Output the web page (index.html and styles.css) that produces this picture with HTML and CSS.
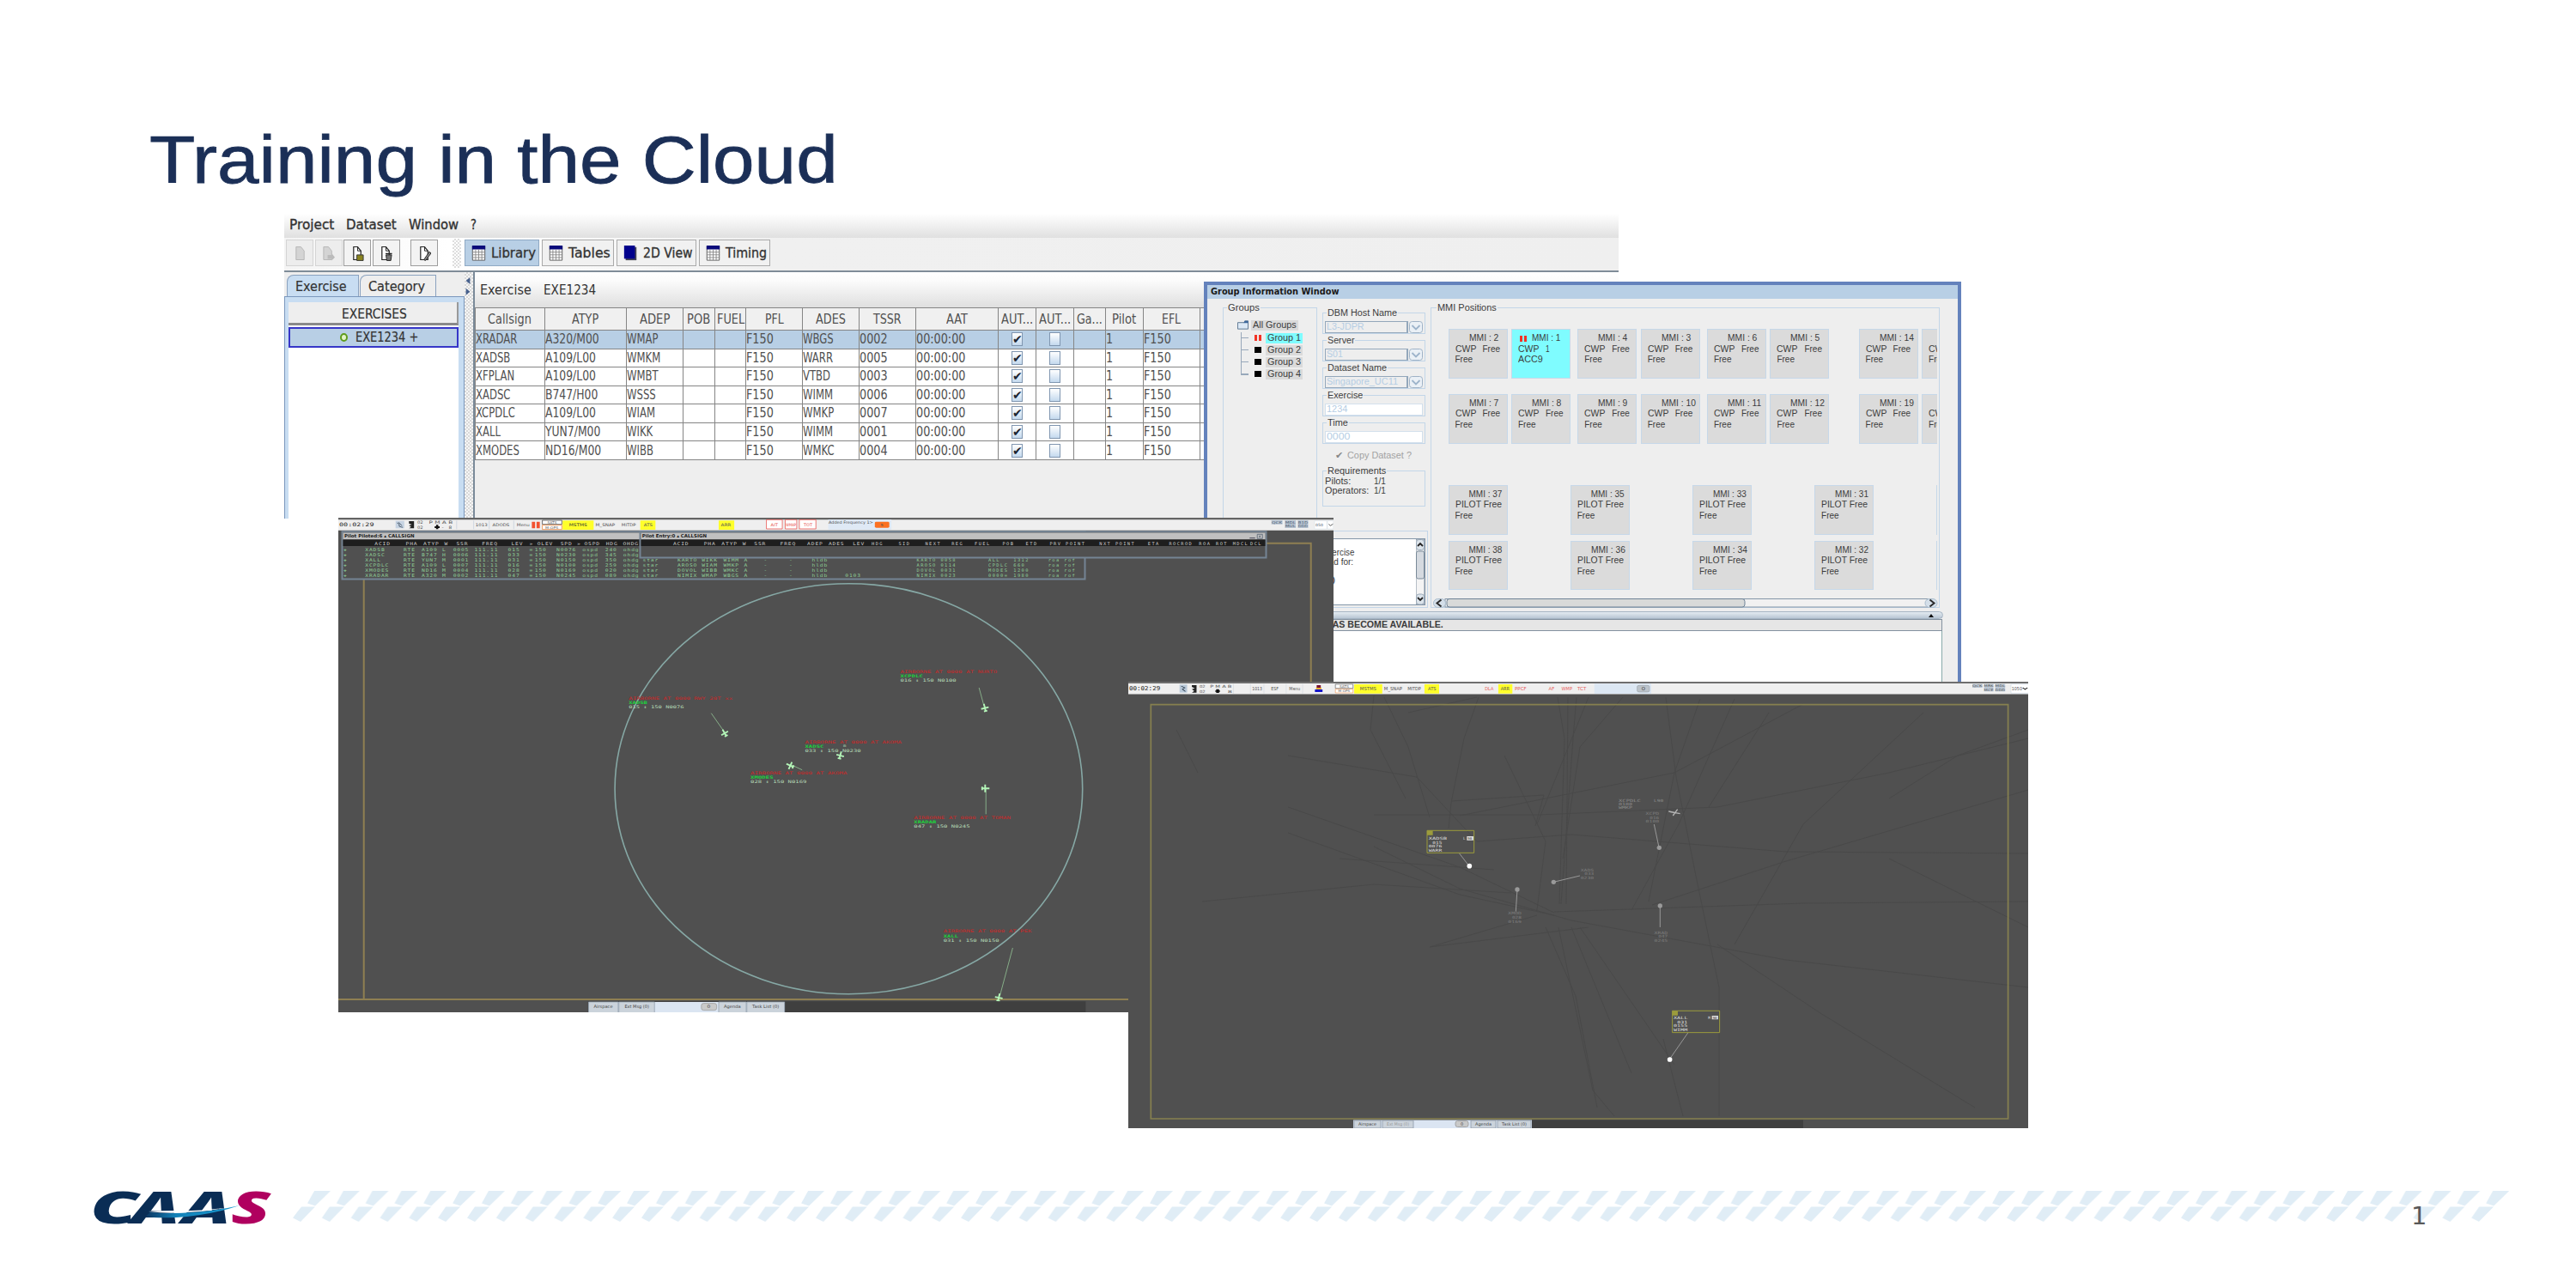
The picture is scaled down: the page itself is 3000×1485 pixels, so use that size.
FILE: index.html
```html
<!DOCTYPE html>
<html lang="en">
<head>
<meta charset="utf-8">
<title>Training in the Cloud</title>
<link rel="stylesheet" href="styles.css">
</head>
<body>
<main class="slide">
<h1 class="title"><span data-w="802">Training in the Cloud</span></h1>

<section class="win editor">
  <nav class="menubar"><span data-w="52">Project</span><span data-w="59">Dataset</span><span data-w="58">Window</span><span data-w="7">?</span></nav>
  <div class="toolbar">
    <div class="tb off"><svg viewBox="0 0 16 20"><path d="M3 2h6l4 5v11H3z" fill="#d4d4d4" stroke="#b5b5b5"/></svg></div>
    <div class="tb off"><svg viewBox="0 0 16 20"><path d="M2 2h6l4 5v11H2z" fill="#d4d4d4" stroke="#b5b5b5"/><path d="M7 12h5v-2l4 5-4 4v-2H7z" fill="#bbb"/></svg></div>
    <div class="tb"><svg viewBox="0 0 16 20"><path d="M3 2h5l4 5v11H3z" fill="#fff" stroke="#222" stroke-width="1.3"/><path d="M8 2v5h4" fill="none" stroke="#222"/><path d="M7 12h8v7H7z" fill="#8a8420" stroke="#333"/></svg></div>
    <div class="tb"><svg viewBox="0 0 16 20"><path d="M3 2h5l4 5v11H3z" fill="#fff" stroke="#222" stroke-width="1.3"/><path d="M8 2v5h4" fill="none" stroke="#222"/><path d="M8 12h7l-1 7H9z" fill="#777" stroke="#222"/><path d="M7.500 10.500h8" stroke="#222" stroke-width="1.500"/></svg></div>
    <div class="tb gap"><svg viewBox="0 0 16 20"><path d="M3 2h5l4 5v11H3z" fill="#fff" stroke="#222" stroke-width="1.3"/><path d="M8 2v5h4" fill="none" stroke="#222"/><path d="M7 18l7-10 2 2-7 9z" fill="#888" stroke="#222"/></svg></div>
    <div class="grip"></div>
    <div class="view on"><svg class="cal"><use href="#cal"/></svg><span data-w="52">Library</span></div>
    <div class="view"><svg class="cal"><use href="#cal"/></svg><span data-w="49">Tables</span></div>
    <div class="view"><svg class="cal" viewBox="0 0 17 20"><path d="M2 2h14v17H2z" fill="#445"/><path d="M0 0h14v17H0z" fill="#00008c"/></svg><span data-w="58">2D View</span></div>
    <div class="view"><svg class="cal"><use href="#cal"/></svg><span data-w="48">Timing</span></div>
  </div>
  <div class="work">
    <aside class="side">
      <div class="tabs"><div class="tab sel"><span data-w="60">Exercise</span></div><div class="tab"><span data-w="66">Category</span></div></div>
      <div class="pane"><div class="list">
        <div class="lhead"><span data-w="76">EXERCISES</span></div>
        <div class="lrow"><i class="ring"></i><span data-w="73">EXE1234 +</span></div>
      </div></div>
    </aside>
    <div class="split"><svg viewBox="0 0 10 34"><path d="M8 2v10L2 7zM2 18v10l6-5z" fill="#47608c"/></svg></div>
    <div class="content">
      <div class="chead"><span data-w="60">Exercise</span><span data-w="61">EXE1234</span></div>
      <table class="grid">
        <colgroup><col class="c1"><col class="c2"><col class="c3"><col class="c4"><col class="c4"><col class="c5"><col class="c5"><col class="c5"><col class="c6"><col class="c7"><col class="c7"><col class="c4"><col class="c8"><col class="c5"><col class="c9"></colgroup>
        <thead><tr><th><span data-w="51">Callsign</span></th><th><span data-w="31">ATYP</span></th><th><span data-w="35">ADEP</span></th><th><span data-w="27">POB</span></th><th><span data-w="32">FUEL</span></th><th><span data-w="22">PFL</span></th><th><span data-w="35">ADES</span></th><th><span data-w="33">TSSR</span></th><th><span data-w="25">AAT</span></th><th><span data-w="37">AUT...</span></th><th><span data-w="37">AUT...</span></th><th><span data-w="30">Ga...</span></th><th><span data-w="28">Pilot</span></th><th><span data-w="22">EFL</span></th><th></th></tr></thead>
        <tbody>
        <tr class="sel"><td><span>XRADAR</span></td><td><span class="m">A320/M00</span></td><td><span>WMAP</span></td><td></td><td></td><td><span class="d">F150</span></td><td><span>WBGS</span></td><td><span class="d">0002</span></td><td><span class="d">00:00:00</span></td><td><i class="cb">✔</i></td><td><i class="cb"></i></td><td></td><td><span class="d">1</span></td><td><span class="d">F150</span></td><td></td></tr>
        <tr><td><span>XADSB</span></td><td><span class="m">A109/L00</span></td><td><span>WMKM</span></td><td></td><td></td><td><span class="d">F150</span></td><td><span>WARR</span></td><td><span class="d">0005</span></td><td><span class="d">00:00:00</span></td><td><i class="cb">✔</i></td><td><i class="cb"></i></td><td></td><td><span class="d">1</span></td><td><span class="d">F150</span></td><td></td></tr>
        <tr><td><span>XFPLAN</span></td><td><span class="m">A109/L00</span></td><td><span>WMBT</span></td><td></td><td></td><td><span class="d">F150</span></td><td><span>VTBD</span></td><td><span class="d">0003</span></td><td><span class="d">00:00:00</span></td><td><i class="cb">✔</i></td><td><i class="cb"></i></td><td></td><td><span class="d">1</span></td><td><span class="d">F150</span></td><td></td></tr>
        <tr><td><span>XADSC</span></td><td><span class="m">B747/H00</span></td><td><span>WSSS</span></td><td></td><td></td><td><span class="d">F150</span></td><td><span>WIMM</span></td><td><span class="d">0006</span></td><td><span class="d">00:00:00</span></td><td><i class="cb">✔</i></td><td><i class="cb"></i></td><td></td><td><span class="d">1</span></td><td><span class="d">F150</span></td><td></td></tr>
        <tr><td><span>XCPDLC</span></td><td><span class="m">A109/L00</span></td><td><span>WIAM</span></td><td></td><td></td><td><span class="d">F150</span></td><td><span>WMKP</span></td><td><span class="d">0007</span></td><td><span class="d">00:00:00</span></td><td><i class="cb">✔</i></td><td><i class="cb"></i></td><td></td><td><span class="d">1</span></td><td><span class="d">F150</span></td><td></td></tr>
        <tr><td><span>XALL</span></td><td><span class="m">YUN7/M00</span></td><td><span>WIKK</span></td><td></td><td></td><td><span class="d">F150</span></td><td><span>WIMM</span></td><td><span class="d">0001</span></td><td><span class="d">00:00:00</span></td><td><i class="cb">✔</i></td><td><i class="cb"></i></td><td></td><td><span class="d">1</span></td><td><span class="d">F150</span></td><td></td></tr>
        <tr><td><span>XMODES</span></td><td><span class="m">ND16/M00</span></td><td><span>WIBB</span></td><td></td><td></td><td><span class="d">F150</span></td><td><span>WMKC</span></td><td><span class="d">0004</span></td><td><span class="d">00:00:00</span></td><td><i class="cb">✔</i></td><td><i class="cb"></i></td><td></td><td><span class="d">1</span></td><td><span class="d">F150</span></td><td></td></tr>
        </tbody>
      </table>
    </div>
  </div>
</section>

<section class="win group">
  <header><span data-w="149">Group Information Window</span></header>
  <div class="gbody">
    <div class="box groups"><b class="lg"><span data-w="37">Groups</span></b>
      <div class="root"><svg viewBox="0 0 14 11"><path d="M.5 2.500h8l1-2h4v10H.5z" fill="#dce9f6" stroke="#56708c"/><path d="M9 .5h4.500V3H8z" fill="#3f6a9c"/></svg><em><span data-w="51">All Groups</span></em></div>
      <div class="tree">
        <div><i class="pause"></i><em class="cy"><span data-w="39">Group 1</span></em></div>
        <div><i class="sq"></i><em><span data-w="39">Group 2</span></em></div>
        <div><i class="sq"></i><em><span data-w="39">Group 3</span></em></div>
        <div><i class="sq"></i><em><span data-w="39">Group 4</span></em></div>
      </div>
    </div>
    <div class="mid">
      <div class="box f"><b class="lg"><span data-w="81">DBM Host Name</span></b><div class="combo"><p><span data-w="44">L3-JDPR</span></p><svg viewBox="0 0 16 14"><use href="#drop"/></svg></div></div>
      <div class="box f"><b class="lg"><span data-w="31">Server</span></b><div class="combo"><p><span data-w="19">S01</span></p><svg viewBox="0 0 16 14"><use href="#drop"/></svg></div></div>
      <div class="box f"><b class="lg"><span data-w="69">Dataset Name</span></b><div class="combo"><p><span data-w="83">Singapore_UC11</span></p><svg viewBox="0 0 16 14"><use href="#drop"/></svg></div></div>
      <div class="box f"><b class="lg"><span data-w="41">Exercise</span></b><div class="input"><span data-w="24">1234</span></div></div>
      <div class="box f"><b class="lg"><span data-w="24">Time</span></b><div class="input"><span data-w="27">0000</span></div></div>
      <div class="copy"><i>✔</i><span data-w="75">Copy Dataset ?</span></div>
      <div class="box req"><b class="lg"><span data-w="68">Requirements</span></b>
        <div class="rq"><span data-w="30">Pilots:</span></div><div class="rq"><span data-w="14">1/1</span></div>
        <div class="rq"><span data-w="51">Operators:</span></div><div class="rq"><span data-w="14">1/1</span></div>
      </div>
      <div class="box msg"><div class="area"><div class="lines"><p><span data-w="37">Exercise</span></p><p><span data-w="36">load for:</span></p><p>&nbsp;</p><p><span data-w="15">(0)</span></p></div>
        <svg viewBox="0 0 10 76"><path d="M0 0h10v76H0z" fill="#f4f4f4" stroke="#7a8a99"/><rect x=".5" y="14" width="9" height="32" rx="2" fill="#d5dae0" stroke="#7a8a99"/><rect x=".5" y=".5" width="9" height="12" rx="3" fill="#dbe3ea" stroke="#9aa9b8"/><rect x=".5" y="64" width="9" height="12" rx="3" fill="#dbe3ea" stroke="#9aa9b8"/><path d="M2 8l3-3 3 3M2 68l3 3 3-3" fill="none" stroke="#222" stroke-width="1.8"/></svg></div></div>
    </div>
    <div class="box mmi"><b class="lg"><span data-w="69">MMI Positions</span></b>
      <div class="row r1">
        <div class="pair"><div class="card"><p><span data-w="34">MMI : 2</span></p><p><span data-w="24">CWP</span><span data-w="21">Free</span></p><p><span data-w="21">Free</span></p></div><div class="card on"><p><i class="pause"></i><span data-w="33">MMI : 1</span></p><p><span data-w="24">CWP</span><span data-w="5">1</span></p><p><span data-w="29">ACC9</span></p></div></div>
        <div class="pair"><div class="card"><p><span data-w="34">MMI : 4</span></p><p><span data-w="24">CWP</span><span data-w="21">Free</span></p><p><span data-w="21">Free</span></p></div><div class="card"><p><span data-w="34">MMI : 3</span></p><p><span data-w="24">CWP</span><span data-w="21">Free</span></p><p><span data-w="21">Free</span></p></div></div>
        <div class="pair"><div class="card"><p><span data-w="34">MMI : 6</span></p><p><span data-w="24">CWP</span><span data-w="21">Free</span></p><p><span data-w="21">Free</span></p></div><div class="card"><p><span data-w="34">MMI : 5</span></p><p><span data-w="24">CWP</span><span data-w="21">Free</span></p><p><span data-w="21">Free</span></p></div></div>
        <div class="pair far"><div class="card"><p><span data-w="40">MMI : 14</span></p><p><span data-w="24">CWP</span><span data-w="21">Free</span></p><p><span data-w="21">Free</span></p></div><div class="card"><p>&nbsp;</p><p><span data-w="24">CWP</span></p><p><span data-w="21">Free</span></p></div></div>
      </div>
      <div class="row r2">
        <div class="pair"><div class="card"><p><span data-w="34">MMI : 7</span></p><p><span data-w="24">CWP</span><span data-w="21">Free</span></p><p><span data-w="21">Free</span></p></div><div class="card"><p><span data-w="34">MMI : 8</span></p><p><span data-w="24">CWP</span><span data-w="21">Free</span></p><p><span data-w="21">Free</span></p></div></div>
        <div class="pair"><div class="card"><p><span data-w="34">MMI : 9</span></p><p><span data-w="24">CWP</span><span data-w="21">Free</span></p><p><span data-w="21">Free</span></p></div><div class="card"><p><span data-w="40">MMI : 10</span></p><p><span data-w="24">CWP</span><span data-w="21">Free</span></p><p><span data-w="21">Free</span></p></div></div>
        <div class="pair"><div class="card"><p><span data-w="39">MMI : 11</span></p><p><span data-w="24">CWP</span><span data-w="21">Free</span></p><p><span data-w="21">Free</span></p></div><div class="card"><p><span data-w="40">MMI : 12</span></p><p><span data-w="24">CWP</span><span data-w="21">Free</span></p><p><span data-w="21">Free</span></p></div></div>
        <div class="pair far"><div class="card"><p><span data-w="40">MMI : 19</span></p><p><span data-w="24">CWP</span><span data-w="21">Free</span></p><p><span data-w="21">Free</span></p></div><div class="card"><p>&nbsp;</p><p><span data-w="24">CWP</span></p><p><span data-w="21">Free</span></p></div></div>
      </div>
      <div class="row pil r3">
        <div class="card"><p><span data-w="39">MMI : 37</span></p><p><span data-w="54">PILOT Free</span></p><p><span data-w="21">Free</span></p></div>
        <div class="card"><p><span data-w="39">MMI : 35</span></p><p><span data-w="54">PILOT Free</span></p><p><span data-w="21">Free</span></p></div>
        <div class="card"><p><span data-w="39">MMI : 33</span></p><p><span data-w="54">PILOT Free</span></p><p><span data-w="21">Free</span></p></div>
        <div class="card"><p><span data-w="39">MMI : 31</span></p><p><span data-w="54">PILOT Free</span></p><p><span data-w="21">Free</span></p></div>
        <div class="card"></div>
      </div>
      <div class="row pil r4">
        <div class="card"><p><span data-w="39">MMI : 38</span></p><p><span data-w="54">PILOT Free</span></p><p><span data-w="21">Free</span></p></div>
        <div class="card"><p><span data-w="40">MMI : 36</span></p><p><span data-w="54">PILOT Free</span></p><p><span data-w="21">Free</span></p></div>
        <div class="card"><p><span data-w="40">MMI : 34</span></p><p><span data-w="54">PILOT Free</span></p><p><span data-w="21">Free</span></p></div>
        <div class="card"><p><span data-w="39">MMI : 32</span></p><p><span data-w="54">PILOT Free</span></p><p><span data-w="21">Free</span></p></div>
        <div class="card"></div>
      </div>
      <svg class="hs" viewBox="0 0 588 11"><rect x="14" y=".5" width="562" height="9.500" fill="#f1f1f1" stroke="#8496a8"/><rect x="16" y=".5" width="347" height="9.500" rx="3" fill="#d8dad9" stroke="#6f8396"/><rect x=".5" y=".5" width="14" height="10" rx="5" fill="#d4dfe9" stroke="#a9bccd"/><rect x="573" y=".5" width="14" height="10" rx="5" fill="#d4dfe9" stroke="#a9bccd"/><path d="M9.500 1.500l-5 4 5 4M578.500 1.500l5 4-5 4" fill="none" stroke="#2b2b2b" stroke-width="2"/></svg>
    </div>
  </div>
  <div class="divider"><svg viewBox="0 0 6 4"><path d="M0 4h6L3 0z" fill="#111"/></svg></div>
  <div class="avail"><span data-w="137">HAS BECOME AVAILABLE.</span></div>
  <div class="blank"></div>
</section>

<section class="win radar1">
<svg viewBox="394 603 1159 576" font-family="DejaVu Sans Mono, monospace">
  <path d="M394 603h1159v576H394z" fill="#505050"/>
  <path d="M394 605h1159v12.700H394z" fill="#efefef"/><path d="M394 603h1159v2.200H394z" fill="#646464"/>
  <path d="M423.700 1164V632.700h1103V1164" fill="none" stroke="#8f7f52" stroke-width="2"/>
  <path d="M394 1164h1159" stroke="#8f7f52" stroke-width="2"/>
  <ellipse cx="988.400" cy="918.700" rx="272.300" ry="239" fill="none" stroke="#86a8a5" stroke-width="1.600"/>
  <!-- clock and mode toolbar -->
  <g transform="translate(390 595) scale(.4209 .3333)" font-family="DejaVu Sans, sans-serif" font-size="14" fill="#555">
    <path d="M1365 30h175v36h-175z" fill="#dfe9f5"/>
    <text x="12" y="55" font-size="18" fill="#222" textLength="96" font-family="DejaVu Sans Mono">00:02:29</text>
    <path d="M168 35h24v26h-24z" fill="#c6d3e2"/><path d="M172 42l6 4v8l10 4M176 40l10 12" stroke="#345" stroke-width="2" fill="none"/>
    <path d="M205 36h14v25h-14l6-5-6-5 8-3-8-4z" fill="#222"/>
    <text x="228" y="46" textLength="16">02</text><text x="228" y="62" textLength="16">02</text>
    <text x="260" y="46" textLength="66">P M A B</text><text x="296" y="62">-</text><text x="315" y="62">8</text>
    <path d="M283 49v15M276 57h14" stroke="#111" stroke-width="6"/>
    <path d="M337 34v30M384 34v30M427 34v30M495 34v30" stroke="#c4cfdd" stroke-width="2"/>
    <text x="389" y="53" textLength="33">1013</text><text x="436" y="53" textLength="47">ADODS</text><text x="503" y="53" textLength="36">Menu</text>
    <path d="M545 38h9v23h-9zM558 38h9v23h-9z" fill="#f2502f"/>
    <path d="M574 33h54v14h-54z" fill="#fff" stroke="#444" stroke-width="2"/><path d="M574 50h54v15h-54z" fill="#fff" stroke="#f08030" stroke-width="2"/>
    <text x="588" y="45" font-size="11" textLength="26">SATS</text><text x="582" y="62" font-size="11" textLength="36">M-OPS</text>
    <path d="M630 34h86v32h-86zM845 34h42v32h-42zM1062 34h43v32h-43z" fill="#ffff2a"/>
    <text x="648" y="53" fill="#333" textLength="50">MSTMS</text><text x="721" y="53" textLength="54">M_SNAP</text><text x="793" y="53" textLength="40">MITDP</text><text x="855" y="53" textLength="24">ATS</text><text x="1068" y="53" textLength="28">ARR</text>
    <g fill="#fff" stroke="#e8504c" stroke-width="2"><path d="M1194 31h44v32h-44zM1246 31h32v32h-32zM1285 31h46v32h-46z"/></g>
    <g fill="#e8504c"><text x="1206" y="53" textLength="20">AIT</text><text x="1248" y="53" textLength="28">WMAP</text><text x="1297" y="53" textLength="24">TOT</text></g>
    <text x="1366" y="45" textLength="123">Added Frequency 1&gt;</text>
    <rect x="1494" y="38" width="40" height="21" rx="4" fill="#fb7022"/><text x="1510" y="53" font-size="12">5</text>
  </g>
  <g transform="translate(1000 595) scale(.3571 .3333)" font-family="DejaVu Sans" font-size="12" fill="#4d5e72">
    <path d="M1346 32h36v15h-36zM1390 32h36v28h-36zM1432 32h34v28h-34z" fill="#b9c5d2"/>
    <text x="1347" y="44" textLength="34">QCK</text><text x="1391" y="44" textLength="34">MDL</text><text x="1391" y="58" textLength="34">MUL</text><text x="1433" y="44" textLength="32">B1D</text><text x="1433" y="58" textLength="32">DDD</text>
    <path d="M1487 35h40v28h-40zM1529 35h19v28h-19z" fill="#fff" stroke="#c3d2e0"/><text x="1490" y="53" font-size="13">050</text><path d="M1533 46l5 6 9-6" fill="none" stroke="#222" stroke-width="2"/>
  </g>
  <!-- piloted flights list -->
  <path d="M398.500 619.300h865V674.500h-865z" fill="#505050" stroke="#748494" stroke-width="2"/>
  <path d="M399.500 620.500h863v7.800h-863z" fill="#c0c0c0"/><path d="M399.500 628.500h863v7.500h-863z" fill="#1e1e1e"/>
  <g transform="translate(390 595) scale(.4209 .3333)" font-size="15" letter-spacing="2" fill="#8fce97">
    <text x="26" y="93" font-family="DejaVu Sans" font-size="16" letter-spacing="0" fill="#222" textLength="194" font-weight="bold">Pilot Piloted:6 ▴ CALLSIGN</text>
    <text y="121" fill="#c8c8c8"><tspan x="110">ACID</tspan><tspan x="196">PHA</tspan><tspan x="245">ATYP</tspan><tspan x="303">W</tspan><tspan x="336">SSR</tspan><tspan x="407">FREQ</tspan><tspan x="488">LEV</tspan><tspan x="538">»</tspan><tspan x="560">OLEV</tspan><tspan x="624">SPD</tspan><tspan x="670">»</tspan><tspan x="690">OSPD</tspan><tspan x="750">HDG</tspan><tspan x="797">OHDG</tspan></text>
    <text y="140"><tspan x="24">✚</tspan><tspan x="84">XADSB</tspan><tspan x="190">RTE</tspan><tspan x="240">A109</tspan><tspan x="297">L</tspan><tspan x="327">0005</tspan><tspan x="386">111.11</tspan><tspan x="479">015</tspan><tspan x="538">=</tspan><tspan x="553">150</tspan><tspan x="613">N0076</tspan><tspan x="685">ospd</tspan><tspan x="748">240</tspan><tspan x="798">ohdg</tspan></text>
    <text y="158"><tspan x="24">✚</tspan><tspan x="84">XADSC</tspan><tspan x="190">RTE</tspan><tspan x="240">B747</tspan><tspan x="297">H</tspan><tspan x="327">0006</tspan><tspan x="386">111.11</tspan><tspan x="479">033</tspan><tspan x="538">=</tspan><tspan x="553">150</tspan><tspan x="613">N0230</tspan><tspan x="685">ospd</tspan><tspan x="748">345</tspan><tspan x="798">ohdg</tspan></text>
    <text y="176"><tspan x="24">✚</tspan><tspan x="84">XALL</tspan><tspan x="190">RTE</tspan><tspan x="240">YUN7</tspan><tspan x="297">M</tspan><tspan x="327">0001</tspan><tspan x="386">111.11</tspan><tspan x="479">031</tspan><tspan x="538">=</tspan><tspan x="553">150</tspan><tspan x="613">N0150</tspan><tspan x="685">ospd</tspan><tspan x="748">350</tspan><tspan x="798">ohdg</tspan><tspan x="852">star</tspan><tspan x="948">KARTO</tspan><tspan x="1015">WIKK</tspan><tspan x="1075">WIMM</tspan><tspan x="1132">A</tspan><tspan x="1187">-</tspan><tspan x="1257">-</tspan><tspan x="1320">hldb</tspan></text>
    <text y="194"><tspan x="24">✚</tspan><tspan x="84">XCPDLC</tspan><tspan x="190">RTE</tspan><tspan x="240">A109</tspan><tspan x="297">L</tspan><tspan x="327">0007</tspan><tspan x="386">111.11</tspan><tspan x="479">016</tspan><tspan x="538">=</tspan><tspan x="553">150</tspan><tspan x="613">N0100</tspan><tspan x="685">ospd</tspan><tspan x="748">259</tspan><tspan x="798">ohdg</tspan><tspan x="852">star</tspan><tspan x="948">AROSO</tspan><tspan x="1015">WIAM</tspan><tspan x="1075">WMKP</tspan><tspan x="1132">A</tspan><tspan x="1187">-</tspan><tspan x="1257">-</tspan><tspan x="1320">hldb</tspan></text>
    <text y="212"><tspan x="24">✚</tspan><tspan x="84">XMODES</tspan><tspan x="190">RTE</tspan><tspan x="240">ND16</tspan><tspan x="297">M</tspan><tspan x="327">0004</tspan><tspan x="386">111.11</tspan><tspan x="479">028</tspan><tspan x="538">=</tspan><tspan x="553">150</tspan><tspan x="613">N0169</tspan><tspan x="685">ospd</tspan><tspan x="748">020</tspan><tspan x="798">ohdg</tspan><tspan x="852">star</tspan><tspan x="948">DOVOL</tspan><tspan x="1015">WIBB</tspan><tspan x="1075">WMKC</tspan><tspan x="1132">A</tspan><tspan x="1187">-</tspan><tspan x="1257">-</tspan><tspan x="1320">hldb</tspan></text>
    <text y="230"><tspan x="24">✚</tspan><tspan x="84">XRADAR</tspan><tspan x="190">RTE</tspan><tspan x="240">A320</tspan><tspan x="297">M</tspan><tspan x="327">0002</tspan><tspan x="386">111.11</tspan><tspan x="479">047</tspan><tspan x="538">=</tspan><tspan x="553">150</tspan><tspan x="613">N0245</tspan><tspan x="685">ospd</tspan><tspan x="748">089</tspan><tspan x="798">ohdg</tspan><tspan x="852">star</tspan><tspan x="948">NIMIX</tspan><tspan x="1015">WMAP</tspan><tspan x="1075">WBGS</tspan><tspan x="1132">A</tspan><tspan x="1187">-</tspan><tspan x="1257">-</tspan><tspan x="1320">hldb</tspan><tspan x="1412">0103</tspan></text>
  </g>
  <g transform="translate(1000 595) scale(.3571 .3333)" font-size="15" letter-spacing="4" fill="#8fce97">
    <text y="176"><tspan x="189">KARTO 0058</tspan><tspan x="423">ALL</tspan><tspan x="505">1312</tspan><tspan x="618">roa rof</tspan></text>
    <text y="194"><tspan x="189">AROSO 0114</tspan><tspan x="423">CPDLC</tspan><tspan x="505">660</tspan><tspan x="618">roa rof</tspan></text>
    <text y="212"><tspan x="189">DOVOL 0031</tspan><tspan x="423">MODES</tspan><tspan x="505">1200</tspan><tspan x="618">roa rof</tspan></text>
    <text y="230"><tspan x="189">NIMIX 0023</tspan><tspan x="423">0000=</tspan><tspan x="505">1980</tspan><tspan x="618">roa rof</tspan></text>
  </g>
  <!-- entry flights list -->
  <path d="M745.500 619.300h729V649.500h-729z" fill="#505050" stroke="#748494" stroke-width="2"/>
  <path d="M746.500 620.500h727v7.800h-727z" fill="#c0c0c0"/><path d="M746.500 628.500h727v7.500h-727z" fill="#1e1e1e"/>
  <g transform="translate(390 595) scale(.4209 .3333)" font-size="15" letter-spacing="2" fill="#c8c8c8">
    <text x="850" y="93" font-family="DejaVu Sans" font-size="16" letter-spacing="0" fill="#222" textLength="179" font-weight="bold">Pilot Entry:0 ▴ CALLSIGN</text>
    <text y="121"><tspan x="936">ACID</tspan><tspan x="1021">PHA</tspan><tspan x="1070">ATYP</tspan><tspan x="1128">W</tspan><tspan x="1160">SSR</tspan><tspan x="1232">FREQ</tspan><tspan x="1307">ADEP</tspan><tspan x="1366">ADES</tspan><tspan x="1433">LEV</tspan></text>
  </g>
  <g transform="translate(1000 595) scale(.3571 .3333)" font-size="15" letter-spacing="4" fill="#c8c8c8">
    <text y="121"><tspan x="42">HDG</tspan><tspan x="130">SID</tspan><tspan x="217">NEXT</tspan><tspan x="303">REG</tspan><tspan x="378">FUEL</tspan><tspan x="469">POB</tspan><tspan x="545">ETD</tspan><tspan x="623">PRV POINT</tspan><tspan x="785">NXT POINT</tspan><tspan x="943">ETA</tspan><tspan x="1012">ROCROD</tspan><tspan x="1110">ROA</tspan><tspan x="1165">ROT</tspan><tspan x="1220">MDCL</tspan><tspan x="1277">DCL</tspan></text>
    <path d="M1275 95h18" stroke="#445" stroke-width="3"/><path d="M1300 82h17v15h-17zM1305 86l7 7m0-7l-7 7" fill="none" stroke="#456" stroke-width="2"/>
  </g>
  <!-- track labels -->
  <g transform="translate(680 680) scale(.3954 .3333)" font-size="14">
    <g fill="#c92828"><text x="132" y="405" textLength="306">AIRBORNE AT 0000 RWY 20T xx</text><text x="932" y="311" textLength="285">AIRBORNE AT 0000 AT NURTO</text><text x="651" y="557" textLength="285">AIRBORNE AT 0000 AT AKOMA</text><text x="491" y="665" textLength="284">AIRBORNE AT 0000 AT AKOMA</text><text x="972" y="822" textLength="285">AIRBORNE AT 0000 AT TOMAN</text><text x="1059" y="1219" textLength="260">AIRBORNE AT 0000 AT PEK</text></g>
    <g fill="#1cd23c" font-weight="bold"><text x="132" y="420" textLength="55">XADSB</text><text x="932" y="327" textLength="67">XCPDLC</text><text x="651" y="572" textLength="56">XADSC</text><text x="491" y="681" textLength="67">XMODES</text><text x="972" y="837" textLength="66">XRADAR</text><text x="1059" y="1235" textLength="44">XALL</text></g>
    <g fill="#b4d8b6"><text x="132" y="434" textLength="163">015 ↥ 150 N0076</text><text x="932" y="342" textLength="165">016 ↥ 150 N0100</text><text x="764" y="571">m</text><text x="651" y="588" textLength="165">033 ↥ 150 N0230</text><text x="491" y="696" textLength="165">028 ↥ 150 N0169</text><text x="972" y="853" textLength="165">047 ↥ 150 N0245</text><text x="1059" y="1251" textLength="164">031 ↥ 150 N0150</text></g>
  </g>
  <path d="M828.300 830.700L843 851.700M1140.200 801L1145.800 821.700M922 891L934.200 896.700M1148.200 919V948.300M1179.400 1104L1164.400 1160" stroke="#86ad88" fill="none"/>
  <g fill="none" stroke="#b4f5b8" stroke-width="1.900">
    <use href="#plane" transform="translate(844 854) rotate(-30)"/><use href="#plane" transform="translate(1147 824.700) rotate(-14)"/><use href="#plane" transform="translate(978.500 880) rotate(15)"/><use href="#plane" transform="translate(920.400 891.700) rotate(-65)"/><use href="#plane" transform="translate(1147.300 918.300) rotate(90)"/><use href="#plane" transform="translate(1163.200 1162) rotate(12)"/>
  </g>
  <!-- bottom task bar -->
  <g transform="translate(680 680) scale(.3954 .3333)" font-family="DejaVu Sans" font-size="15" fill="#444">
    <path d="M12 1459h1466v40H12z" fill="#3f3f3f"/><path d="M14 1461h577v38H14z" fill="#dbe5f2"/>
    <path d="M14 1461h87v38H14zM103 1461h105v38H103zM397 1461h81v38h-81zM480 1461h111v38H480z" fill="#cbd3db" stroke="#8d9aa8" stroke-width="2"/>
    <rect x="346" y="1466" width="45" height="24" rx="7" fill="#c9c9c9" stroke="#999" stroke-width="2"/>
    <text x="29" y="1482" textLength="56">Airspace</text><text x="120" y="1482" textLength="72">Ext Msg (0)</text><text x="363" y="1483">0</text><text x="412" y="1482" textLength="50">Agenda</text><text x="496" y="1482" textLength="79">Task List (0)</text>
  </g>
</svg>
</section>

<section class="win radar2">
<svg viewBox="1314 794 1048 520" font-family="DejaVu Sans Mono, monospace">
  <path d="M1314 794h1048v520H1314z" fill="#505050"/>
  <path d="M1314 796h1048v12.500H1314z" fill="#efefef"/><path d="M1314 794h1048v2H1314z" fill="#6e6e6e"/>
  <!-- airways -->
  <g fill="none" stroke="#494949" stroke-width="1">
    <path d="M1600 810L1596 850L1637 930M1612 812L1640 870L1665 952M1722 812L1705 860L1690 935L1687 965M1600 949L1792 949L2000 940L2200 900L2362 860"/>
    <path d="M1814 812L1822 860L1816 1053M1826 812L1824 1053M1836 812L1832 860L1818 1053M1890 812L1840 870L1820 1000"/>
    <path d="M1690 933L1798 926L1788 962M1700 950L1950 900L2100 820M1720 980L1830 972L2080 992L2362 994M1600 986L1700 1035L1830 1072L2080 1118L2362 1150"/>
    <path d="M1500 970L1700 1042L1810 1066M1665 1103L1850 1080M1665 1103L1790 1066M1810 1062L2100 1052L2362 1050"/>
    <path d="M1924 1054L2080 1003L2362 920M1815 1080L1855 1270L1880 1300M1830 1080L1900 1250M1840 1080L1950 1240M1800 1080L1835 1160L1860 1290"/>
    <path d="M1940 812L1952 905L1975 1020L2002 1150L2002 1300M1980 814L1950 900L1920 1050M2020 814L1955 960L1900 1060M2060 830L1990 940M2240 830L2100 960L2020 1100"/>
    <path d="M1370 850L1395 900M1500 880L1650 905L1720 980M1560 1000L1700 1010L1740 1013M2362 850L2280 880L2200 930M2200 1000L2362 1080M2000 1100L2120 1180L2300 1290"/>
    <path d="M1752 880L1800 980L1790 1060M1850 812L1790 960M1400 1050L1600 1030L1760 1040M1937 1210L1960 1300M1640 830L1720 812M1810 1063L1700 1010L1500 940"/>
  </g>
  <path d="M1340.300 820.700H2338.600V1303H1340.300z" fill="none" stroke="#86804f" stroke-width="1.700"/>
  <g transform="translate(1300 780) scale(.6824 .3333)" font-family="DejaVu Sans" font-size="15" fill="#555">
    <text x="22" y="73" font-size="19" fill="#222" font-family="DejaVu Sans Mono" textLength="53">00:02:29</text>
    <path d="M108 52h13v28h-13z" fill="#b9c9d9"/><path d="M111 58l6 5-4 5 5 8" stroke="#345" stroke-width="2" fill="none"/><path d="M129 54h8v26h-8l4-6-4-6 5-3-5-5z" fill="#222"/>
    <text x="142" y="62" font-size="13" textLength="10">02</text><text x="142" y="80" font-size="13" textLength="10">02</text><text x="160" y="62" font-size="13" textLength="37">P M A B</text><text x="190" y="80" font-size="12">8</text>
    <path d="M173 68v13M169 75h8" stroke="#111" stroke-width="5"/>
    <path d="M200 50v34M229 50v34M252 50v34M290 50v34M318 50v34" stroke="#ccd3dd"/>
    <text x="232" y="72" textLength="17">1013</text><text x="264" y="72" textLength="13">ESF</text><text x="295" y="72" textLength="19">Menu</text>
    <path d="M341 62h9v8h-9z" fill="#e8b030"/><path d="M342 54h7v9h-7z" fill="#713"/><path d="M339 69h13v9h-13z" fill="#1616c8"/>
    <path d="M374 51h30v14h-30z" fill="#fff" stroke="#333"/><path d="M374 68h30v13h-30z" fill="#fff" stroke="#f08030"/><text x="381" y="62" font-size="11" textLength="16">SATS</text><text x="379" y="79" font-size="11" textLength="20">M-OPS</text>
    <path d="M406 51h48v32h-48zM526 51h25v32h-25zM652 51h24v32h-24z" fill="#ffff2a"/><path d="M816 49h97v35h-97z" fill="#dce7f3"/>
    <text x="416" y="72" textLength="28">MSTMS</text><text x="457" y="72" textLength="31">M_SNAP</text><text x="497" y="72" textLength="23">MITDP</text><text x="532" y="72" textLength="14">ATS</text><text x="656" y="72" textLength="15">ARR</text>
    <g fill="#e8605c"><text x="629" y="72" textLength="15">DLA</text><text x="680" y="72" textLength="20">PPCF</text><text x="738" y="72" textLength="10">AF</text><text x="760" y="72" textLength="18">WMP</text><text x="787" y="72" textLength="15">TCT</text></g>
    <rect x="889" y="55" width="21" height="23" rx="4" fill="#bcc3ca" stroke="#8b949c"/><text x="896" y="72" textLength="7">0</text>
    <path d="M1461 50h17v13h-17zM1481 50h16v26h-16zM1500 50h17v26h-17z" fill="#b9c5d2"/><g font-size="11"><text x="1461" y="61" textLength="17">QCK</text><text x="1481" y="61" textLength="16">MRK</text><text x="1481" y="75" textLength="16">MCE</text><text x="1500" y="61" textLength="17">MDL</text><text x="1500" y="75" textLength="17">DDD</text></g>
    <path d="M1527 51h30v31h-30z" fill="#fff" stroke="#c3d2e0"/><text x="1528" y="72" textLength="18">1050</text><path d="M1547 63l4 6 4-6" fill="none" stroke="#222" stroke-width="2"/>
  </g>
  <g transform="translate(1600 880) scale(.3333)" font-size="13" fill="#8b8b8b">
    <g stroke="#999" stroke-width="3" fill="none"><path d="M298 341L332 385M1098 968L1034 1060M979 240L996 320M628 442L720 420M501 468L496 545M1000 524V600" /><path d="M1035 197l35 6M1045 210l16-22M1030 195l25 5" stroke="#b5b5b5" stroke-width="4"/></g>
    <g fill="#9a9a9a"><circle cx="997" cy="322" r="8"/><circle cx="628" cy="442" r="8"/><circle cx="501" cy="468" r="8"/><circle cx="1000" cy="525" r="8"/></g>
    <g fill="#fff"><circle cx="334" cy="386" r="8.500"/><circle cx="1034" cy="1062" r="8.500"/></g>
    <path d="M186 262h164v78H186zM1043 892h165v76h-165z" fill="none" stroke="#9c9c3c" stroke-width="3"/><path d="M186 262h20v16h-20zM1043 892h19v16h-19z" fill="#9c9c3c"/>
    <g fill="#ddd"><text x="191" y="294" textLength="64">XADSB</text><text x="205" y="308" textLength="33">015</text><text x="191" y="322" textLength="47">0076</text><text x="191" y="336" textLength="47">WARR</text><text x="312" y="294">L</text>
    <text x="1047" y="921" textLength="50">XALL</text><text x="1060" y="935" textLength="36">031</text><text x="1047" y="949" textLength="49">0155</text><text x="1047" y="963" textLength="49">WIMM</text><text x="1168" y="921">M</text></g>
    <path d="M325 282h23v14h-23zM1181 909h22v13h-22z" fill="#ddd"/><text x="328" y="294" fill="#333" font-size="12">90</text><text x="1184" y="920" fill="#333" font-size="12">90</text>
    <text x="855" y="161" textLength="78">XCPDLC</text><text x="978" y="161" textLength="34">L90</text><text x="855" y="174" textLength="48">0100</text><text x="855" y="187" textLength="48">WMKP</text>
    <g fill="#7c7c7c"><text x="950" y="207" textLength="47">XCPD</text><text x="964" y="221" textLength="33">016</text><text x="950" y="235" textLength="47">0100</text>
    <text x="722" y="404" textLength="47">XADS</text><text x="736" y="418" textLength="33">033</text><text x="722" y="432" textLength="47">0230</text>
    <text x="469" y="556" textLength="47">XMOD</text><text x="483" y="570" textLength="33">028</text><text x="469" y="584" textLength="47">0169</text>
    <text x="980" y="623" textLength="47">XRAD</text><text x="994" y="637" textLength="33">047</text><text x="980" y="651" textLength="47">0245</text></g>
  </g>
  <g font-family="DejaVu Sans" font-size="5" fill="#444">
    <path d="M1576 1304.500h524v10h-524z" fill="#3f3f3f"/><path d="M1576 1304.500h208v10h-208z" fill="#dbe5f2"/>
    <path d="M1577 1305h31v9h-31zM1610 1305h36v9h-36zM1713 1305h29v9h-29zM1744 1305h39v9h-39z" fill="#cbd3db" stroke="#8d9aa8" stroke-width=".8"/><rect x="1695" y="1305.500" width="15" height="7" rx="2.500" fill="#c9c9c9" stroke="#999" stroke-width=".8"/>
    <text x="1582" y="1311" textLength="21">Airspace</text><text x="1615" y="1311" fill="#999" textLength="26">Ext Msg (0)</text><text x="1701" y="1311">0</text><text x="1718" y="1311" textLength="19">Agenda</text><text x="1749" y="1311" textLength="29">Task List (0)</text>
  </g>
</svg>
</section>

<footer class="foot">
  <svg class="logo" viewBox="0 0 210 48" font-family="Open Sans, sans-serif" font-weight="800" font-style="italic" font-size="51">
    <defs><linearGradient id="sw"><stop offset="0" stop-color="#0b2d57"/><stop offset=".35" stop-color="#1382b8"/><stop offset="1" stop-color="#1b9ad0"/></linearGradient></defs>
    <g fill="#0a2d55"><text x="-2" y="42" textLength="56">C</text><text x="46" y="42" textLength="57">A</text><text x="105" y="42" textLength="57">A</text></g>
    <text x="162" y="42" fill="#b0005f" textLength="46">S</text>
    <path d="M58 24q8 6 30 6 45 0 84-9-36 12-74 14-22 1-36-1l6-5z" fill="url(#sw)"/><path d="M66 28q22 3 44 1 26-1 50-6-32 5-60 4-20 0-34 1z" fill="#fff"/>
  </svg>
  <svg class="stripes" width="2582" height="36"><defs><pattern id="st" width="33.830" height="36" patternUnits="userSpaceOnUse"><g fill="#e0edf6"><path d="M25 0h19L26 17.500 17 14.500zM9 18.500h17L9 36 0 31.500z"/><path d="M-8.830 0h19L-7.830 17.500-16.830 14.500z"/></g></pattern></defs><path d="M0 0h2582v36H0z" fill="url(#st)"/></svg>
  <span class="num">1</span>
</footer>
</main>
<svg class="defs"><defs>
  <symbol id="cal" viewBox="0 0 17 20"><path d="M.5 1h16v18H.5z" fill="#fff" stroke="#555"/><path d="M0 0h17v5H0z" fill="#0a0a7a"/><path d="M4.500 5v14M8.500 5v14M12.500 5v14M0 8.500h17M0 12h17M0 15.500h17" stroke="#888" fill="none"/></symbol>
  <symbol id="drop" viewBox="0 0 16 14"><rect x=".5" y=".5" width="15" height="13" rx="3" fill="#eaf0f6" stroke="#9fb2c6"/><path d="M3.500 5l4.500 4.500L12.500 5" fill="none" stroke="#9db4cb" stroke-width="1.800"/></symbol>
  <g id="plane"><path d="M0-5V4M-4.500 0H4.500M-2 3.500H2"/></g>
</defs></svg>
<script src="fit.js"></script>
</body>
</html>
```
FILE: styles.css
```css
* { box-sizing: border-box; }
body { margin: 0; background: #fff; font-family: "DejaVu Sans", sans-serif; }
p { margin: 0; }
i, em { font-style: normal; }
svg { display: block; }
.defs { position: absolute; width: 0; height: 0; }
.slide { position: relative; width: 3000px; height: 1485px; overflow: hidden; background: #fff; }
[data-w] { display: inline-block; white-space: nowrap; transform-origin: 0 50%; }
.title { margin: 0; padding: 141px 0 0 174px; font: 400 77px/90px "Liberation Sans", Arial, sans-serif; color: #1b2f57; -webkit-text-stroke: .8px #1b2f57; }

/* windows are placed freely over the slide */
.win { position: absolute; overflow: hidden; }

.editor { left: 331px; top: 249px; width: 1554px; height: 355px; background: #eee; font-size: 15px; color: #333; display: flex; flex-direction: column; }
.menubar { height: 28px; flex: none; display: flex; padding-left: 6px; gap: 14px; line-height: 27px; background: linear-gradient(#fff, #e0e0e0); -webkit-text-stroke: .35px #333; }
.toolbar { height: 40px; flex: none; display: flex; padding: 2px 0 0 2px; border-bottom: 2px solid #7f8c98; background: linear-gradient(90deg, #f4f4f4 0, #fff 190px, #f0f0f0 570px, #efefef); align-items: flex-start; }
.tb { width: 32px; height: 31px; margin-right: 1.500px; border: 1px solid #9d9d9d; background: #f3f3f3; display: flex; align-items: center; justify-content: center; }
.tb svg { width: 15px; height: 20px; }
.tb.off { border-color: #d4d4d4; background: #ededed; }
.tb.gap { margin-left: 11px; }
.grip { width: 10px; height: 34px; margin: -1px 4px 0 15px; background: repeating-conic-gradient(#ddd 0 25%, #fff 0 50%) 0 0/4px 4px; }
.view { height: 31px; border: 1px solid #aaa; background: #f1f1f1; display: flex; align-items: center; gap: 6px; padding: 0 3px 0 7px; margin-right: 3px; line-height: 30px; font-size: 16px; -webkit-text-stroke: .35px #333; }
.view.on { background: #b8cfe5; border-color: #8fa9c4; }
.cal { width: 17px; height: 18px; }
.work { display: flex; flex: 1; }
.side { width: 210px; display: flex; flex-direction: column; padding-top: 3px; font-size: 16px; -webkit-text-stroke: .2px #333; }
.tabs { display: flex; gap: 1px; padding-left: 3px; height: 25px; line-height: 26px; }
.tab { width: 89px; padding-left: 9px; border: 1px solid #8aa2bf; border-bottom: 0; border-radius: 8px 0 0 0; background: #eee; }
.tab.sel { width: 84px; background: #c8ddf2; }
.pane { flex: 1; border: 1px solid #7b98bd; border-bottom: 0; background: #c8ddf2; padding: 6px 6px 0 4px; }
.list { height: 100%; background: #fff; }
.lhead { height: 27px; line-height: 27px; text-align: center; background: #eee; border-bottom: 3px solid #8a8a8a; border-right: 2px solid #999; padding-left: 3px; }
.lrow { height: 24px; margin-top: 2px; border: 2px solid #3636c8; background: #b8cfe5; display: flex; align-items: center; justify-content: center; gap: 9px; line-height: 20px; padding-left: 13px; }
.ring { width: 9px; height: 10px; border: 2px solid #5f9c1c; border-radius: 50%; background: #e4f3c8; }
.split { width: 10px; background: repeating-conic-gradient(#d8d8d8 0 25%, #f6f6f6 0 50%) 0 0/4px 4px; padding-top: 1px; }
.split svg { width: 8px; height: 34px; }
.content { flex: 1; border-left: 2px solid #7a8a99; min-width: 0; overflow: hidden; }
.chead { height: 41px; line-height: 41px; padding: 0 0 0 6px; display: flex; gap: 14px; font-size: 16.500px; background: linear-gradient(#fff, #fbfbfb 25%, #dfdfdf); }
.grid { border-collapse: collapse; table-layout: fixed; width: 944px; font-size: 16.500px; color: #505050; }
.grid th, .grid td { padding: 0; border: 1px solid #858585; overflow: hidden; white-space: nowrap; }
.grid th { height: 26px; font-weight: 400; line-height: 25px; background: #f0f0f0; }
.grid td { height: 21.550px; line-height: 20px; background: #fff; }
.grid td span { display: block; width: 0; transform: scaleX(.705); transform-origin: 0 50%; }
.grid td span.m { transform: scaleX(.75); }
.grid td span.d { transform: scaleX(.775); }
.grid .sel td { background: #b8cfe5; }
.c1 { width: 80.600px; } .c2 { width: 95.600px; } .c3 { width: 65.700px; } .c4 { width: 36.800px; } .c5 { width: 66px; } .c6 { width: 95.600px; } .c7 { width: 44px; } .c8 { width: 44px; } .c9 { width: 100px; }
.cb { display: block; width: 13px; height: 16px; margin: 0 auto; border: 1px solid #8096b0; background: linear-gradient(#fff, #c4d9ee); font-size: 14px; line-height: 14px; color: #1c2430; text-align: center; }

.group { left: 1402px; top: 328px; width: 882px; height: 470px; border: 4px solid #6482bc; border-bottom: 0; background: #eee; font: 10px/12px "Liberation Sans", Arial, sans-serif; color: #3c3c3c; display: flex; flex-direction: column; }
.group header { height: 16px; flex: none; background: #b8cfe5; padding-left: 4px; font: bold 10px/15px "DejaVu Sans", sans-serif; color: #1a1a1a; }
.gbody { display: flex; height: 364px; flex: none; padding: 10px 0 0 18px; gap: 6px; }
.box { border: 1px solid #c3d6e8; }
.lg { display: table; height: 10px; margin: -5px 0 0 4px; padding: 0 1px; line-height: 10px; font-weight: 400; background: #eee; }
.groups { width: 110px; flex: none; height: 348px; }
.group em { background: #dadada; padding: 0 2px; display: block; height: 12px; }
.group em.cy { background: #7ffcff; }
.root { display: flex; gap: 3px; margin: 9px 0 2px 16px; }
.root svg { width: 13px; height: 11px; }
.tree { margin-left: 20px; width: 9px; height: 50px; border-left: 1px solid #98a8ba; border-bottom: 1px solid #98a8ba; }
.tree div { display: flex; align-items: center; width: 80px; height: 13.900px; }
.tree div::before { content: ""; width: 8px; height: 1px; background: #98a8ba; margin-right: 7px; }
.tree em { margin-left: 5px; }
.sq { width: 8px; height: 7px; background: #000; }
.pause { width: 8px; height: 7px; background: linear-gradient(90deg, #f23325 0 38%, transparent 38% 62%, #f23325 62%); }
.mid { width: 120px; flex: none; display: flex; flex-direction: column; gap: 7px; padding-top: 6px; }
.f { height: 25px; flex: none; color: #3c3c3c; }
.combo { display: flex; margin: 4px 2px 0 2px; height: 14px; gap: 1px; }
.combo p { flex: 1; border: 1px solid #93a7bb; border-right-width: 2px; padding-left: 1px; color: #b5cde4; line-height: 12px; }
.combo svg { width: 16px; height: 14px; }
.input { margin: 4px 2px 0 2px; height: 14px; background: #fff; border: 1px solid #d3e0ec; padding-left: 1px; line-height: 12px; color: #b5cde4; }
.copy { display: flex; height: 14px; flex: none; line-height: 14px; padding-left: 15px; gap: 2px; color: #a2a2a2; }
.copy i { width: 12px; font: 11px/14px "DejaVu Sans"; color: #888; }
.req { height: 42px; flex: none; margin-top: 3px; display: grid; grid-template-columns: 57px 1fr; grid-template-rows: 6px 10.500px 10.500px; padding-left: 2px; }
.req .lg { grid-column: 1 / 3; justify-self: start; margin-left: 2px; }
.rq { line-height: 11px; }
.msg { width: 123px; height: 90px; flex: none; margin-top: 21px; padding: 8px 2px 2px 0; }
.area { height: 78px; display: flex; border: 1px solid #8496a8; background: #fff; }
.lines { flex: 1; padding: 11px 0 0 0; line-height: 10.600px; }
.lines span { margin-left: -2px; }
.area svg { width: 10px; height: 76px; }
.mmi { width: 593px; flex: none; height: 350px; padding: 0 2px; }
.row { display: flex; gap: 8.200px; margin-left: 17.500px; overflow: hidden; }
.r1 { margin-top: 19px; height: 58px; } .r2 { margin-top: 17.500px; height: 58px; } .r3 { margin-top: 48px; height: 58px; } .r4 { margin-top: 7.300px; height: 57px; }
.pair { display: flex; gap: 4.500px; flex: none; }
.far { margin-left: 26px; }
.pil { gap: 73.200px; }
.card { width: 69px; flex: none; overflow: hidden; border: 1px solid #c6d8e9; background: #dbdbdb; padding: 4px 0 0 7px; line-height: 12.700px; white-space: nowrap; }
.card p { display: flex; gap: 8px; height: 12.700px; }
.card p:first-child { padding-left: 16px; }
.card.on { background: #7ffcff; }
.card.on p:first-child { padding-left: 2px; gap: 6px; align-items: center; }
.hs { width: 588px; height: 11px; margin-top: 10px; }
.divider { height: 9px; flex: none; margin-right: 17px; background: linear-gradient(#e4ebf1, #b8c6d4); border-radius: 0 5px 5px 0; border: 1px solid #a5b4c3; display: flex; justify-content: flex-end; padding: 2px 10px 0; }
.divider svg { width: 6px; height: 4px; }
.avail { height: 14px; flex: none; margin-right: 18px; background: #e6e6e6; border: 1px solid #8492a0; padding-left: 137px; font: bold 10px/12px "Liberation Sans", Arial, sans-serif; }
.blank { flex: 1; margin-right: 18px; background: #fff; border-right: 1px solid #8aa; }

.radar1 { left: 394px; top: 603px; width: 1159px; height: 576px; }
.radar2 { left: 1314px; top: 794px; width: 1048px; height: 520px; }
.win > svg { width: 100%; height: 100%; }

.foot { position: absolute; left: 109px; top: 1384px; display: flex; align-items: flex-start; }
.logo { width: 210px; height: 48px; overflow: visible; margin: -1px 2px 0 -2px; }
.stripes { margin: 3px 0 0 22px; clip-path: polygon(25px 0, 100% 0, 2546px 100%, 0 100%, 0 31px); }
.num { position: relative; font-size: 29px; line-height: 36px; color: #595959; margin: 14px 0 0 -115px; }
```
FILE: fit.js
```js
document.querySelectorAll('[data-w]').forEach(function (el) {
  var w = parseFloat(el.dataset.w);
  var natural = el.offsetWidth;
  el.style.width = w + 'px';
  el.style.transform = 'scaleX(' + (w / natural).toFixed(4) + ')';
});
// Labels on the scopes stretch their glyphs, not only the gaps between them.
document.querySelectorAll('text[textLength]').forEach(function (el) {
  el.setAttribute('lengthAdjust', 'spacingAndGlyphs');
});
```
